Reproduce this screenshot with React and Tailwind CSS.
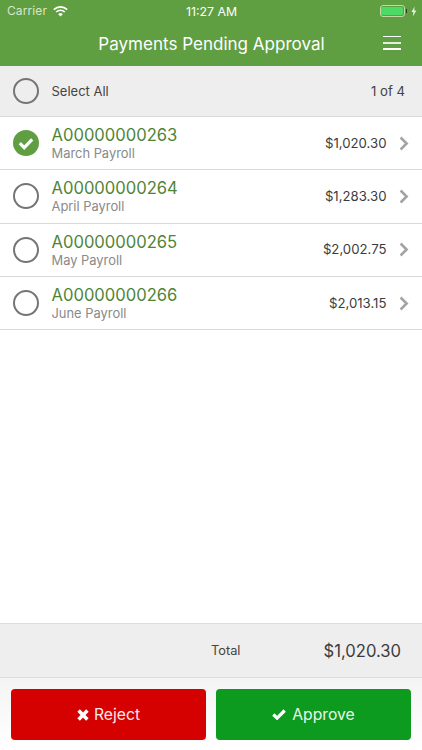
import React from "react";

const items = [
  { id: "A00000000263", name: "March Payroll", amount: "$1,020.30", checked: true },
  { id: "A00000000264", name: "April Payroll", amount: "$1,283.30" },
  { id: "A00000000265", name: "May Payroll", amount: "$2,002.75" },
  { id: "A00000000266", name: "June Payroll", amount: "$2,013.15" },
];

function Circle({ checked }) {
  if (checked) {
    return (
      <svg width="26" height="26" viewBox="0 0 26 26" className="shrink-0">
        <circle cx="13" cy="13" r="13" fill="#5f9e41" />
        <path d="M6.8 13.2l4.4 4.4 8-8.2" fill="none" stroke="#fff" strokeWidth="3.2" />
      </svg>
    );
  }
  return (
    <svg width="26" height="26" viewBox="0 0 26 26" className="shrink-0">
      <circle cx="13" cy="13" r="12" fill="none" stroke="#757575" strokeWidth="2" />
    </svg>
  );
}

function Row({ item }) {
  return (
    <div className="flex h-[53.3px] items-center border-b border-[#d9d9d9] bg-white pl-[13px] pr-[13px]">
      <Circle checked={item.checked} />
      <div className="ml-[12.5px] flex-1 pt-[2px]">
        <div className="text-[16.6px] leading-[19px] text-[#4f8436]">{item.id}</div>
        <div className="text-[12.9px] leading-[17px] text-[#8a8a8a]">{item.name}</div>
      </div>
      <div className="pt-[1px] text-[13.2px] text-[#3c3c3c]">{item.amount}</div>
      <svg width="10" height="15" viewBox="0 0 10 15" className="ml-[12.5px] shrink-0">
        <path d="M1.6 1.5L7.6 7.5l-6 6" fill="none" stroke="#a3a3a3" strokeWidth="2.6" />
      </svg>
    </div>
  );
}

export default function App() {
  return (
    <div className="flex h-[750px] w-[422px] flex-col overflow-hidden bg-white font-['Inter','Liberation_Sans',sans-serif]">
      <div className="h-[66px] shrink-0 bg-[#5f9e41]">
        <div className="relative flex h-[22px] items-center justify-between pl-[7px] pr-[5px] text-[12px] text-[#d8e6ce]">
          <div className="flex items-center gap-[6px]">
            <span className="tracking-[0.1px]">Carrier</span>
            <svg width="15" height="11" viewBox="0 0 15 11">
              <path d="M0.8 3.6a9.6 9.6 0 0 1 13.4 0" fill="none" stroke="#fff" strokeWidth="1.6" />
              <path d="M3.2 6a6.2 6.2 0 0 1 8.6 0" fill="none" stroke="#fff" strokeWidth="1.6" />
              <path d="M5.2 8.2a3.2 3.2 0 0 1 4.6 0L7.5 10.6z" fill="#fff" />
            </svg>
          </div>
          <span className="absolute left-[186px] top-[3px] text-[12.3px] text-white">11:27 AM</span>
          <div className="flex items-center gap-[1px]">
            <div className="flex h-[11.5px] w-[25px] items-center justify-center rounded-[3px] border border-[#c5d8a5]">
              <div className="h-[8px] w-[21.5px] rounded-[1.5px] bg-[#4cd964]" />
            </div>
            <div className="mr-[3px] h-[4px] w-[1.5px] bg-[#2c3a20]" />
            <svg width="6" height="11" viewBox="0 0 6 10">
              <path d="M3.6 0L0.4 5.6h2L1.8 10l3.6-6H3.2z" fill="#e8f0e0" />
            </svg>
          </div>
        </div>
        <div className="relative flex h-[44px] items-center justify-center">
          <span className="relative left-[0.5px] text-[17.05px] font-normal text-white">Payments Pending Approval</span>
          <div className="absolute right-[21px] top-[13.5px] flex w-[18.5px] flex-col gap-[4.8px]">
            <div className="h-[1.7px] bg-white" />
            <div className="h-[1.7px] bg-[#e4eddc]" />
            <div className="h-[1.7px] bg-white" />
          </div>
        </div>
      </div>

      <div className="flex h-[51px] shrink-0 items-center border-b border-[#d9d9d9] bg-[#eeeeee] pl-[13px] pr-[17px]">
        <Circle />
        <span className="ml-[12.5px] flex-1 pt-[1px] text-[13px] text-[#444444]">Select All</span>
        <span className="pt-[1px] text-[13.2px] text-[#444444]">1 of 4</span>
      </div>

      <div className="flex-1 bg-white">
        {items.map((item) => (
          <Row key={item.id} item={item} />
        ))}
      </div>

      <div className="flex h-[55px] shrink-0 items-center border-y border-[#dcdcdc] bg-[#eeeeee] pl-[211px] pr-[21px] pt-[1px]">
        <span className="flex-1 text-[12.8px] text-[#444444]">Total</span>
        <span className="text-[16.6px] text-[#3c3c3c]">$1,020.30</span>
      </div>

      <div className="flex h-[72px] shrink-0 gap-[10px] bg-gradient-to-b from-[#f4f4f4] to-white px-[11px] pt-[11px]">
        <button className="flex h-[50.5px] w-[195px] items-center justify-center gap-[5px] rounded-[4px] bg-[#d50000] pt-[1px] text-[15.7px] text-[#fbe9e9]">
          <svg width="12" height="12" viewBox="0 0 12 12">
            <path d="M1.6 1.6l8.8 8.8M10.4 1.6l-8.8 8.8" stroke="#fff" strokeWidth="3.6" />
          </svg>
          Reject
        </button>
        <button className="flex h-[50.5px] w-[195px] items-center justify-center gap-[6px] rounded-[4px] bg-[#0c9a1f] pt-[1px] text-[15.7px] text-[#e9f7ea]">
          <svg width="14" height="11" viewBox="0 0 14 11">
            <path d="M1.3 5.5l3.8 3.6 7.6-7.6" fill="none" stroke="#fff" strokeWidth="3.2" />
          </svg>
          Approve
        </button>
      </div>
    </div>
  );
}
